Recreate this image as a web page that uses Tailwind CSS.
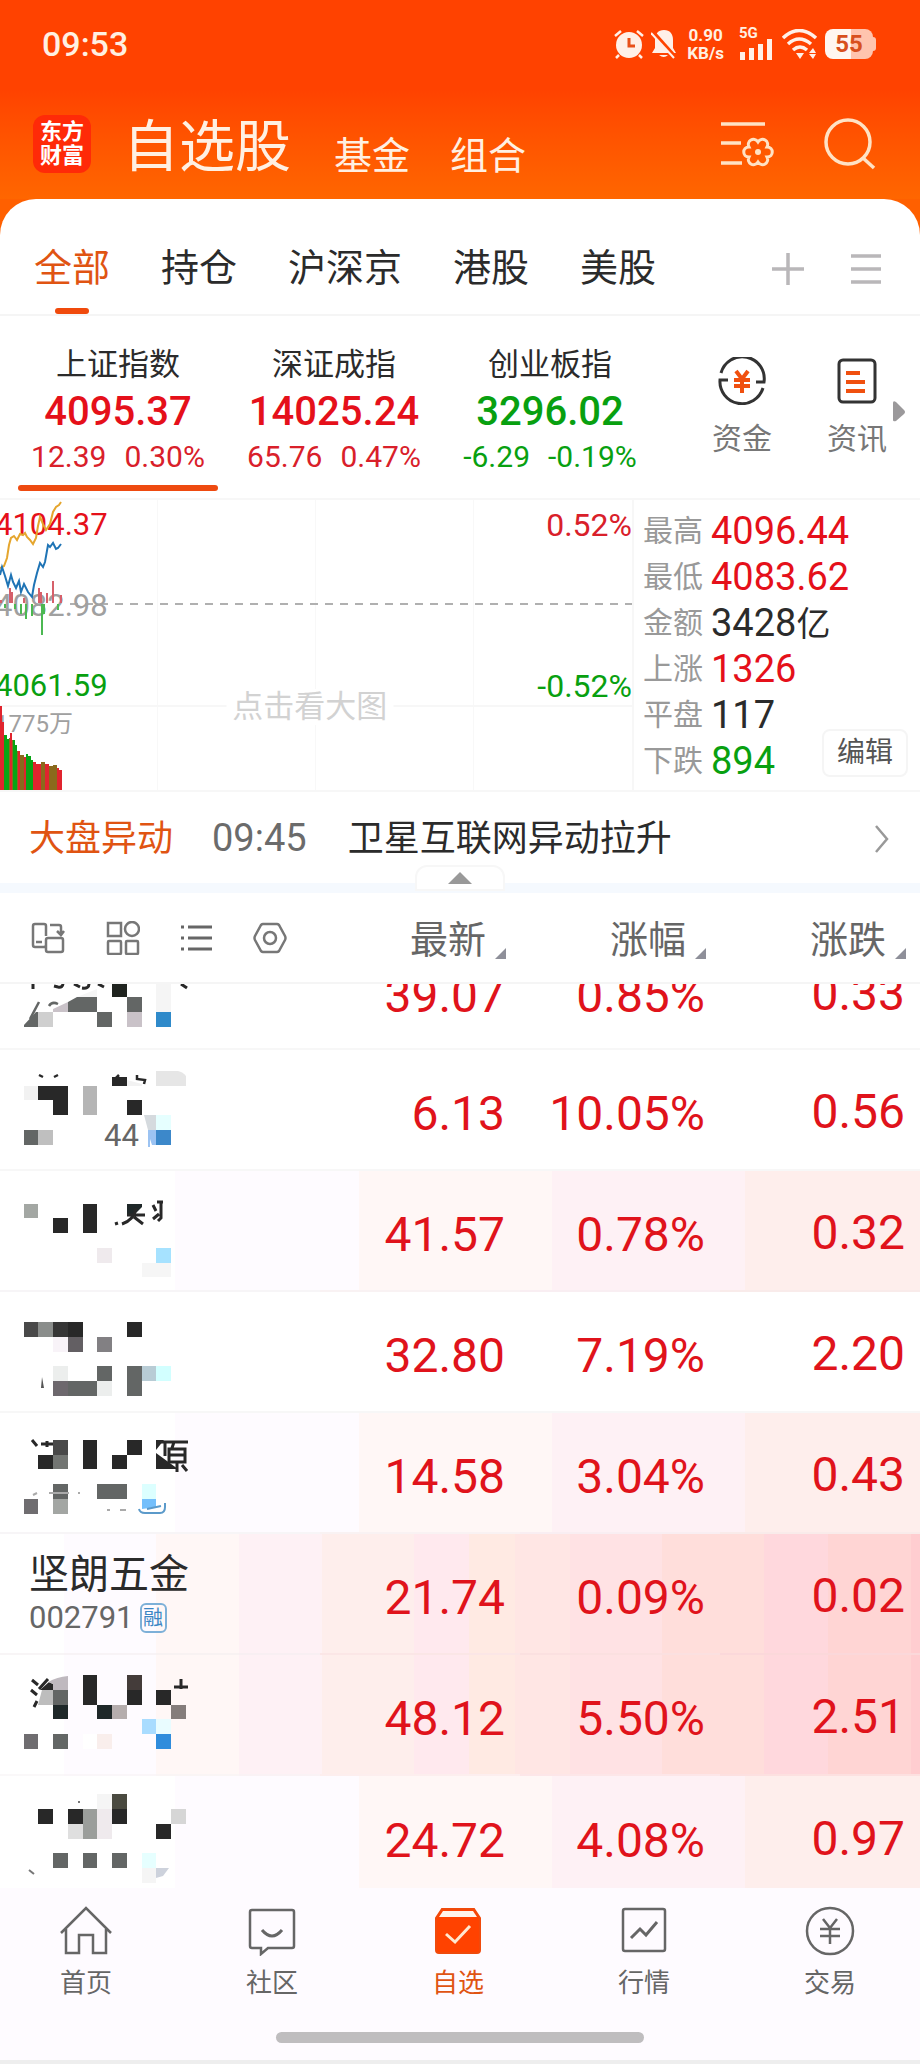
<!DOCTYPE html>
<html lang="zh-CN">

<head>
	<meta charset="UTF-8">
	<meta name="viewport" content="width=device-width, initial-scale=1.0">
	<script src="https://cdn.jsdelivr.net/npm/@tailwindcss/browser@4"></script>
	<title>自选股</title>
</head>

<body class="h-screen flex flex-col bg-white text-[#2b2b2b] font-['Roboto','Noto_Sans_CJK_SC',sans-serif]">

	<header class="bg-linear-to-b from-[#ff4200] from-45% to-[#ff6600] shrink-0 text-[#fff0e2]">

		<!-- Status bar -->
		<div class="flex items-center justify-between h-[88px] pl-[42px] pr-[44px]">
			<span class="text-[34px] leading-none font-medium">09:53</span>
			<div class="flex items-center gap-[7px]">
				<svg class="w-[30px] h-[30px]" viewBox="0 0 30 30">
					<circle cx="15" cy="16" r="13" fill="#fff0e8" />
					<path d="M1 7l6-5M29 7l-6-5M5 26l-3 3M25 26l3 3" stroke="#fff0e8" stroke-width="2.5" />
					<path d="M15 9v8h6" fill="none" stroke="#e8501a" stroke-width="3" />
				</svg>
				<svg class="w-[25px] h-[30px]" viewBox="0 0 25 30">
					<path d="M13 1c6 0 9 4 9 10v8l3 5H1l3-5v-8C4 5 7 1 13 1zM8 26h9q-4 4-9 0z" fill="#fff0e8" />
					<path d="M0 1l25 28" stroke="#ff4400" stroke-width="4" />
					<path d="M0 4l23 25" stroke="#fff0e8" stroke-width="2" />
				</svg>
				<div class="text-[17px] leading-[18px] font-bold text-center ml-1">0.90<br>KB/s</div>
				<div class="flex flex-col ml-2 w-[36px]">
					<span class="text-[15px] leading-[11px] font-bold">5G</span>
					<svg class="w-[34px] h-[21px]" viewBox="0 0 34 21">
						<path d="M1 13h5v8H1zM10 9h5v12h-5zM19 5h5v16h-5zM28 0h5v21h-5z" fill="#fff0e8" />
					</svg>
				</div>
				<svg class="w-[36px] h-[30px]" viewBox="0 0 36 30">
					<path d="M1 9q16-15 33 0M6 15q11-10 23 0M11 21q7-6 14 0" fill="none" stroke="#fff0e8" stroke-width="3.5" />
					<path d="M14 24h8l-4 6zM27 24l4-5 3 5zM27 25h7l-3 5z" fill="#fff0e8" />
				</svg>
				<div class="flex items-center">
					<span class="w-[48px] h-[30px] rounded-lg bg-linear-to-r from-[#fff6f0] from-55% to-[#ffc4ae] to-55% text-[#d8501e] text-[24px] leading-[30px] font-bold text-center">55</span>
					<span class="w-[3px] h-[14px] rounded-r bg-[#ffc4ae]"></span>
				</div>
			</div>
		</div>

		<!-- Title bar -->
		<div class="flex items-center h-[111px] pl-[33px] pr-[44px]">
			<div class="w-[58px] h-[58px] rounded-xl bg-[#ff2a08] text-white text-[22px] leading-[24px] font-bold text-center pt-[5px]">东方<br>财富</div>
			<h1 class="text-[56px] leading-[60px] ml-[32px] mt-[6px]">自选股</h1>
			<a href="#" class="text-[38px] leading-[40px] ml-[43px] mt-[24px]">基金</a>
			<a href="#" class="text-[38px] leading-[40px] ml-[40px] mt-[24px]">组合</a>
			<button class="ml-auto" aria-label="设置">
				<svg class="w-[53px] h-[46px]" viewBox="0 0 53 46" fill="none" stroke="#ffe2c4" stroke-width="3.5">
					<path d="M0 3h44M0 22h20M0 42h21" />
					<path d="M46 26C53 26 53 36 46 36C49 42 41 47 37 41C33 47 25 42 28 36C21 36 21 26 28 26C25 20 33 15 37 21C41 15 49 20 46 26z" stroke-width="3" />
					<circle cx="37" cy="31" r="3" fill="#ffe2c4" stroke="none" />
				</svg>
			</button>
			<button class="ml-[50px]" aria-label="搜索">
				<svg class="w-[52px] h-[52px]" viewBox="0 0 52 52" fill="none" stroke="#ffe2c4" stroke-width="3.5">
					<circle cx="24" cy="24" r="22" />
					<path d="M39 40l11 10" />
				</svg>
			</button>
		</div>
	</header>

	<div class="bg-[#ff6000] shrink-0">
		<!-- Group tabs -->
		<nav class="flex items-center h-[117px] pl-[34px] pr-[39px] pt-[24px] bg-white rounded-t-[36px] border-b-2 border-[#f5f5f5] text-[38px]">
			<div class="flex h-full gap-[51px]">
				<a href="#" class="relative flex items-center text-[#e05412]">全部
					<span class="absolute bottom-0 left-1/2 -translate-x-1/2 w-[34px] h-[6px] rounded-full bg-[#f04a0c]"></span>
				</a>
				<a href="#" class="flex items-center">持仓</a>
				<a href="#" class="flex items-center">沪深京</a>
				<a href="#" class="flex items-center">港股</a>
				<a href="#" class="flex items-center">美股</a>
			</div>
			<button class="ml-auto" aria-label="添加">
				<svg class="w-[32px] h-[32px]" viewBox="0 0 32 32" stroke="#b9b7b9" stroke-width="3.5">
					<path d="M16 0v32M0 16h32" />
				</svg>
			</button>
			<button class="ml-[47px]" aria-label="分组">
				<svg class="w-[30px] h-[32px]" viewBox="0 0 30 32" stroke="#b9b7b9" stroke-width="3.5">
					<path d="M0 3h30M0 16h30M0 29h30" />
				</svg>
			</button>
		</nav>
	</div>

	<!-- Indices -->
	<section class="relative flex shrink-0 h-[184px] pl-[10px] border-b-2 border-[#f7f7f7]">
		<div class="w-[216px] flex flex-col items-center pt-[31px]">
			<span class="text-[31px] leading-[36px]">上证指数</span>
			<span class="text-[40px] leading-[58px] font-medium text-[#e5101a]">4095.37</span>
			<span class="flex gap-[18px] text-[30px] leading-[32px] text-[#d9202a]"><span>12.39</span><span>0.30%</span></span>
			<span class="w-[200px] h-[6px] mt-[12px] rounded-full bg-[#ee4a10]"></span>
		</div>
		<div class="w-[216px] flex flex-col items-center pt-[31px]">
			<span class="text-[31px] leading-[36px]">深证成指</span>
			<span class="text-[40px] leading-[58px] font-medium text-[#e5101a]">14025.24</span>
			<span class="flex gap-[18px] text-[30px] leading-[32px] text-[#d9202a]"><span>65.76</span><span>0.47%</span></span>
		</div>
		<div class="w-[216px] flex flex-col items-center pt-[31px]">
			<span class="text-[31px] leading-[36px]">创业板指</span>
			<span class="text-[40px] leading-[58px] font-medium text-[#08a010]">3296.02</span>
			<span class="flex gap-[18px] text-[30px] leading-[32px] text-[#08a010]"><span>-6.29</span><span>-0.19%</span></span>
		</div>
		<div class="flex-1 flex justify-end gap-[55px] pr-[33px] pt-[41px] text-[30px] leading-[36px] text-[#777]">
			<a href="#" class="flex flex-col items-center gap-[16px]">
				<svg class="w-[48px] h-[48px]" viewBox="0 0 48 48" fill="none" stroke="#333" stroke-width="3">
					<path d="M3 16A22 22 0 0 1 46 25h-8M45 31A22 22 0 0 1 2 23h8" />
					<path d="M18 14l6 8 6-8M24 22v14M16 23h16M16 29h16" stroke="#f0500f" stroke-width="4" />
				</svg>
				资金
			</a>
			<a href="#" class="flex flex-col items-center gap-[16px]">
				<svg class="w-[40px] h-[48px]" viewBox="0 0 40 48" fill="none" stroke="#333" stroke-width="3">
					<rect x="2" y="3" width="36" height="42" rx="4" />
					<path d="M9 16h14M9 25h19M9 34h19" stroke="#f0500f" stroke-width="4" />
				</svg>
				资讯
			</a>
		</div>
		<svg class="absolute right-[15px] top-[85px] w-[12px] h-[21px]" viewBox="0 0 12 21">
			<path d="M0 2q0-3 3-1l8 8q2 2 0 4l-8 7q-3 1-3-1z" fill="#9b999b" />
		</svg>
	</section>

	<!-- Chart and market figures -->
	<section class="flex shrink-0 h-[292px] border-b-2 border-[#f7f7f7]">
		<div class="relative flex-1 overflow-hidden border-r-2 border-[#f7f7f7]">
			<div class="absolute inset-0 grid grid-cols-4 divide-x divide-[#f8f8f8]">
				<i></i><i></i><i></i><i></i>
			</div>
			<div class="absolute inset-x-0 top-[205px] h-[2px] bg-[#f7f7f7]"></div>
			<div class="absolute right-0 left-[70px] top-[103px] h-[2px] bg-[repeating-linear-gradient(90deg,#b0b0b0_0px,#b0b0b0_8px,transparent_8px,transparent_15px)]"></div>

			<span class="absolute -left-[5px] top-[7px] text-[31px] leading-[36px] text-[#e5101a]">4104.37</span>
			<span class="absolute -left-[5px] top-[88px] text-[31px] leading-[36px] text-[#a0a0a0]">4082.98</span>
			<span class="absolute -left-[5px] top-[168px] text-[31px] leading-[36px] text-[#08a010]">4061.59</span>
			<span class="absolute -left-[5px] top-[206px] text-[24px] leading-[36px] text-[#a0a0a0]">1775万</span>
			<span class="absolute right-0 top-[7px] text-[32px] leading-[36px] text-[#d9202a]">0.52%</span>
			<span class="absolute right-0 top-[168px] text-[32px] leading-[36px] text-[#08a010]">-0.52%</span>

			<svg class="absolute left-0 top-0 w-[64px] h-[290px]" viewBox="0 0 64 290" fill="none">
				<g stroke-width="2">
					<path stroke="#d6606a" d="M10 88v15M12 92v11M24 98v5M39 88v15M41 92v11M47 93v10M53 81v22M61 95v8M1 100v3" />
					<path stroke="#4cb852" d="M5 104v4M15 104v5M21 104v10M26 104v15M32 104v12M42 104v31M44 104v10M58 104v6" />
				</g>
				<path stroke="#e5a62e" stroke-width="2" d="M0 68l4-2 3-8 2-13 2-7 3-2 3 4 3-6 3 1 2-2 2 4 3 3 3 4 3-6 2-12 2-9 3 7 3 6 4-6 3-12 3-5 3-2 2-3" />
				<path stroke="#1f74b5" stroke-width="2" d="M0 75l2-8 3 9 3 10 3-11 2 7 3 6 3-7 2 11 3-8 4 8 4 5 2-12 3-12 3-10 3 4 2-5 3-17 2 2 3-4 3 6 2-1 3-4" />
				<path fill="#e0242e" d="M0 206h2v84h-2zM2 222h2v68h-2zM10 233h2v57h-2zM18 251h2v39h-2zM24 257h2v33h-2zM33 262h3v28h-3zM36 264h5v26h-5zM45 264h4v26h-4zM57 268h2v22h-2zM59 270h3v20h-3z" />
				<path fill="#08a414" d="M4 235h3v55h-3zM7 239h2v51h-2zM13 240h2v50h-2zM15 245h2v45h-2zM26 254h2v36h-2zM28 256h3v34h-3zM31 260h2v30h-2z" />
				<path fill="#8a6a1c" d="M9 238h1v52h-1zM12 240h1v50h-1zM17 251h1v39h-1zM20 255h4v35h-4zM41 262h4v28h-4zM49 266h4v24h-4zM53 265h4v25h-4z" />
			</svg>

			<span class="absolute left-[49%] -translate-x-1/2 top-[189px] px-[6px] text-[31px] leading-[36px] text-[#d2d2d2] bg-white">点击看大图</span>
		</div>

		<div class="relative w-[286px] pt-[8px] pl-[9px]">
			<dl class="grid grid-cols-[60px_1fr] gap-x-[8px] items-center text-[38px] leading-[46px]">
				<dt class="text-[30px] leading-[46px] text-[#999]">最高</dt>
				<dd class="text-[#e5101a]">4096.44</dd>
				<dt class="text-[30px] leading-[46px] text-[#999]">最低</dt>
				<dd class="text-[#e5101a]">4083.62</dd>
				<dt class="text-[30px] leading-[46px] text-[#999]">金额</dt>
				<dd>3428<span class="text-[34px] leading-none">亿</span></dd>
				<dt class="text-[30px] leading-[46px] text-[#999]">上涨</dt>
				<dd class="text-[#e5101a]">1326</dd>
				<dt class="text-[30px] leading-[46px] text-[#999]">平盘</dt>
				<dd>117</dd>
				<dt class="text-[30px] leading-[46px] text-[#999]">下跌</dt>
				<dd class="text-[#08a010]">894</dd>
			</dl>
			<button class="absolute right-[12px] bottom-[13px] w-[86px] h-[48px] rounded-lg border-2 border-[#f5f5f5] bg-white text-[28px] leading-none text-[#555]">编辑</button>
		</div>
	</section>

	<!-- Market news -->
	<section class="relative flex items-center shrink-0 h-[101px] pl-[29px] pr-[31px] pt-[2px] border-b-10 border-[#f5f9fe] text-[36px]">
		<span class="text-[#e05412]">大盘异动</span>
		<time class="text-[38px] text-[#6b6b6b] ml-[39px]">09:45</time>
		<a href="#" class="ml-[41px]">卫星互联网异动拉升</a>
		<svg class="ml-auto w-[14px] h-[28px]" viewBox="0 0 14 28" fill="none" stroke="#999" stroke-width="2.5">
			<path d="M1 1l11 13L1 27" />
		</svg>
		<button class="absolute -bottom-[8px] left-1/2 -translate-x-1/2 w-[90px] h-[26px] rounded-t-xl border-2 border-[#f7f7f7] bg-white flex items-center justify-center" aria-label="收起">
			<svg class="w-[24px] h-[12px]" viewBox="0 0 24 12">
				<path d="M12 0l12 12H0z" fill="#999" />
			</svg>
		</button>
	</section>

	<!-- Watchlist -->
	<main class="flex-1 min-h-0 overflow-hidden">
		<table class="w-full table-fixed border-separate border-spacing-0 text-[48px] leading-none text-[#e0131b]">
			<thead class="text-[38px] text-[#666]">
				<tr>
					<th class="h-[91px] border-b-2 border-[#f5f5f5] pl-[31px]">
						<div class="flex items-center gap-[41px]">
							<button aria-label="切换">
								<svg class="w-[34px] h-[32px]" viewBox="0 0 34 32" fill="none" stroke="#777" stroke-width="2.5">
									<path d="M15 14V4q0-2-2-2H4Q2 2 2 4v19q0 2 2 2h9q2 0 2-2v-5q0-2 2-2h13q2 0 2 2v10q0 2-2 2H17q-2 0-2-2v-5M5 20h6M19 3h9q2 0 2 2v7M26 9l4 4 3-4" />
								</svg>
							</button>
							<button aria-label="宫格">
								<svg class="w-[34px] h-[34px]" viewBox="0 0 34 34" fill="none" stroke="#777" stroke-width="2.5">
									<rect x="2" y="2" width="13" height="13" />
									<circle cx="26" cy="8" r="7" />
									<rect x="2" y="20" width="13" height="13" rx="1" />
									<rect x="20" y="20" width="12" height="13" rx="1" />
								</svg>
							</button>
							<button aria-label="列表">
								<svg class="w-[31px] h-[28px]" viewBox="0 0 31 28" stroke="#666" stroke-width="3">
									<path d="M7 3h24M7 14h24M7 25h24M0 3h3M0 14h3M0 25h3" />
								</svg>
							</button>
							<button aria-label="设置">
								<svg class="w-[34px] h-[32px]" viewBox="0 0 34 32" fill="none" stroke="#777" stroke-width="2.5">
									<path d="M10 2h14q1 0 2 1l6 11q1 2 0 4l-6 11q-1 1-2 1H10q-1 0-2-1L2 18q-1-2 0-4L8 3q1-1 2-1z" />
									<circle cx="17" cy="16" r="6" />
								</svg>
							</button>
						</div>
					</th>
					<th class="w-[200px] pt-[4px] border-b-2 border-[#f5f5f5] pr-[14px] font-normal">
						<button class="ml-auto flex items-end gap-[9px]">最新
							<svg class="w-[11px] h-[11px]" viewBox="0 0 11 11"><path d="M11 0v11H0z" fill="#8e8f99" /></svg>
						</button>
					</th>
					<th class="w-[200px] pt-[4px] border-b-2 border-[#f5f5f5] pr-[14px] font-normal">
						<button class="ml-auto flex items-end gap-[9px]">涨幅
							<svg class="w-[11px] h-[11px]" viewBox="0 0 11 11"><path d="M11 0v11H0z" fill="#8e8f99" /></svg>
						</button>
					</th>
					<th class="w-[200px] pt-[4px] border-b-2 border-[#f5f5f5] pr-[14px] font-normal">
						<button class="ml-auto flex items-end gap-[9px]">涨跌
							<svg class="w-[11px] h-[11px]" viewBox="0 0 11 11"><path d="M11 0v11H0z" fill="#8e8f99" /></svg>
						</button>
					</th>
				</tr>
			</thead>
			<tbody class="text-right">
				<!-- first row is half scrolled under the header -->
				<tr>
					<td class="h-[66px] p-0 border-b-2 border-[#f7f7f7]">
						<svg class="w-[200px] h-[64px]" viewBox="0 55 200 64">
							<path fill="#20241f" d="M112 53h15v15h-15z" />
							<path fill="#636665" d="M68 73l9-5h20v15H68zM127 68h15v15h-15zM24 96l12-13h2v15H24zM97 83h15v15H97z" />
							<path fill="#c9c2c8" d="M53 80l15-7v10H53zM127 83h15v15h-15z" />
							<path fill="#cfcfcf" d="M38 83h15v15H38z" />
							<path fill="#f5f5f5" d="M77 68l20-8v8zM156 53h15v30h-15z" />
							<path fill="#2f8aca" d="M156 83h15v15h-15z" />
							<path fill="none" stroke="#282828" stroke-width="3" d="M33 54v6M54 57l4 1M58 58q5 1 5-4M74 55l6 3M82 59q7 1 7-4M98 55l6 3M181 55l6 4" />
							<path fill="none" stroke="#636665" stroke-width="2.5" d="M39 73l-9 17M49 77q3-5 9-2" />
						</svg>
					</td>
					<td class="p-0 border-b-2 border-[#f7f7f7]">
						<div class="flex items-end justify-end h-[64px] overflow-hidden pr-[15px] pb-[28px]">39.07</div>
					</td>
					<td class="p-0 border-b-2 border-[#f7f7f7]">
						<div class="flex items-end justify-end h-[64px] overflow-hidden pr-[15px] pb-[28px]">0.85%</div>
					</td>
					<td class="p-0 border-b-2 border-[#f7f7f7]">
						<div class="flex items-end justify-end h-[64px] overflow-hidden pr-[15px] pb-[30px]">0.33</div>
					</td>
				</tr>
				<tr>
					<td class="h-[121px] p-0 border-b-2 border-[#f7f7f7]">
						<svg class="w-[200px] h-[119px]" viewBox="0 0 200 119">
							<path fill="#282828" d="M38 36h30v29H53V50H38zM112 27h15v9h-15zM127 50h15v15h-15z" />
							<path fill="#b5b5b5" d="M83 36h14v29H83z" />
							<path fill="#f2f2f2" d="M24 36h14v14H24zM127 30l15 4v2h-15z" />
							<path fill="#e6e6e6" d="M156 21h22q5 1 8 5v10h-30z" />
							<path fill="#d5dade" d="M144 65h12v15h-8z" />
							<path fill="#e6ffff" d="M156 65h15v15h-15z" />
							<path fill="#9cc3f2" d="M148 80h8v15h-4l-2-6v8h-2z" />
							<path fill="#3c88ca" d="M156 80h15v15h-15z" />
							<path fill="#636665" d="M24 80h14v15H24z" />
							<path fill="#bfbfbf" d="M38 80h15v15H38z" />
							<path fill="none" stroke="#282828" stroke-width="2.5" d="M39 25l4 2M54 27l4-2M116 28l3-3M137 25v4l8 1-1 4" />
							<text x="104" y="96" font-size="31" fill="#666">44</text>
						</svg>
					</td>
					<td class="pt-[8px] pr-[15px] border-b-2 border-[#f7f7f7]">6.13</td>
					<td class="pt-[8px] pr-[15px] border-b-2 border-[#f7f7f7]">10.05%</td>
					<td class="pt-[4px] pr-[15px] border-b-2 border-[#f7f7f7]">0.56</td>
				</tr>
				<tr class="bg-[linear-gradient(90deg,#fff_19%,#fefbff_19%,#fefbff_39%,#fff7f6_39%,#fff7f6_60%,#fef1f5_60%,#fef1f5_81%,#feeeec_81%)]">
					<td class="h-[121px] p-0 border-b-2 border-[#f7f5f7]">
						<svg class="w-[200px] h-[119px]" viewBox="0 0 200 119">
							<path fill="#a3a7a3" d="M24 33h14v14H24z" />
							<path fill="#282828" d="M53 47h15v15H53zM83 33h14v29H83z" />
							<path fill="#1f2829" d="M127 33h15v3l-8 8h-7z" />
							<path fill="#efeaed" d="M97 77h15v15H97z" />
							<path fill="#a6e2ff" d="M156 77h15v15h-15z" />
							<path fill="#f6f6f6" d="M142 92h29v14h-29z" />
							<path fill="none" stroke="#282828" stroke-width="3" d="M127 44h18M136 37q-2 12-14 16M134 46l9 7M115 53l3-1M153 34l3 6M153 48l6-5M157 31h6M161 31v16l-3 3" />
						</svg>
					</td>
					<td class="pt-[8px] pr-[15px] border-b-2 border-[#f9f2f3]">41.57</td>
					<td class="pt-[8px] pr-[15px] border-b-2 border-[#f9eef2]">0.78%</td>
					<td class="pt-[4px] pr-[15px] border-b-2 border-[#f9ebea]">0.32</td>
				</tr>
				<tr>
					<td class="h-[121px] p-0 border-b-2 border-[#f7f7f7]">
						<svg class="w-[200px] h-[119px]" viewBox="0 0 200 119">
							<path fill="#494949" d="M24 30h14v15H24z" />
							<path fill="#8a8d8b" d="M38 30h15v15H38z" />
							<path fill="#363636" d="M53 30h15v15H53z" />
							<path fill="#282828" d="M68 30h15v15H68zM127 30h15v15h-15z" />
							<path fill="#f8f3f8" d="M53 45h15v15H53z" />
							<path fill="#635f63" d="M68 45h15v15H68z" />
							<path fill="#828083" d="M97 45h15v15H97z" />
							<path fill="#eceeed" d="M53 74h15v15H53zM97 89h15v15H97z" />
							<path fill="#636665" d="M97 74h15v15H97zM127 74h15v30h-15zM68 89h29v15H68z" />
							<path fill="#6d686d" d="M53 89h15v15H53z" />
							<path fill="#b8ccd5" d="M142 74h14v15h-14z" />
							<path fill="#d2ffff" d="M156 74h15v15h-15z" />
							<path fill="#555" d="M42 85l2 11h-3z" />
						</svg>
					</td>
					<td class="pt-[8px] pr-[15px] border-b-2 border-[#f7f7f7]">32.80</td>
					<td class="pt-[8px] pr-[15px] border-b-2 border-[#f7f7f7]">7.19%</td>
					<td class="pt-[4px] pr-[15px] border-b-2 border-[#f7f7f7]">2.20</td>
				</tr>
				<tr class="bg-[linear-gradient(90deg,#fff_19%,#fefbff_19%,#fefbff_39%,#fff7f6_39%,#fff7f6_60%,#fef1f5_60%,#fef1f5_81%,#feeeec_81%)]">
					<td class="h-[121px] p-0 border-b-2 border-[#f7f5f7]">
						<svg class="w-[200px] h-[119px]" viewBox="0 0 200 119">
							<path fill="#494949" d="M53 27h15v15H53z" />
							<path fill="#282828" d="M38 42h15v14H38zM83 27h14v29H83zM127 27h15v15h-15zM112 42h15v14h-15zM156 27h8l-8 10zM156 40l22 16h-22z" />
							<path fill="#737673" d="M53 42h15v14H53z" />
							<path fill="#636665" d="M53 71h15v15H53zM97 71h30v15H97z" />
							<path fill="#6f6d70" d="M24 86h14v15H24z" />
							<path fill="#a3a6a3" d="M53 86h15v15H53z" />
							<path fill="#dcffff" d="M142 71h14v15h-14z" />
							<path fill="#74bffb" d="M142 86h14v8l-14 2z" />
							<path fill="none" stroke="#282828" stroke-width="3" d="M32 27l5 6M41 31h12M47 28v6M161 29h27M165 29v14M174 29l-2 6M169 36h16v13h-16zM169 42h16M177 49v10M182 52l5 6M167 52l4 2" />
							<path fill="none" stroke="#aaa" stroke-width="2" d="M33 82l4-2M49 80h20M78 80h2M107 97h3M120 97h6" />
							<path fill="none" stroke="#5b9aca" stroke-width="2" d="M139 96q1 4 6 4h15q5 0 5-6v-4M147 96l14-3" />
						</svg>
					</td>
					<td class="pt-[8px] pr-[15px] border-b-2 border-[#f9f2f3]">14.58</td>
					<td class="pt-[8px] pr-[15px] border-b-2 border-[#f9eef2]">3.04%</td>
					<td class="pt-[4px] pr-[15px] border-b-2 border-[#f9ebea]">0.43</td>
				</tr>
				<tr class="bg-[linear-gradient(90deg,#fff_7%,#fefbff_7%,#fefbff_17%,#fff7f6_17%,#fff7f6_26%,#fef1f5_26%,#fef1f5_35%,#feeeec_35%,#feeeec_45%,#ffe9ee_45%,#ffe9ee_51%,#ffeae3_51%,#ffeae3_56%,#ffe6e4_56%,#ffe6e4_62%,#ffe2e4_62%,#ffe2e4_72%,#ffdedb_72%,#ffdedb_83%,#ffd8dd_83%,#ffd8dd_90%,#ffd5d4_90%,#ffd5d4_99%,#ffcdd0_99%)]">
					<td class="h-[121px] p-0 pt-[4px] pl-[29px] border-b-2 border-[#f3eef0]/60 text-left text-[#2b2b2b]">
						<div class="text-[40px] leading-[44px]">坚朗五金</div>
						<div class="flex items-center gap-[6px] text-[31px] leading-[42px] text-[#666]">002791
							<span class="w-[27px] h-[30px] rounded-md border-2 border-[#7db0d8] text-[20px] leading-[26px] text-center text-[#3b86c4]">融</span>
						</div>
					</td>
					<td class="pt-[8px] pr-[15px] border-b-2 border-[#fbe6e6]">21.74</td>
					<td class="pt-[8px] pr-[15px] border-b-2 border-[#fbe0e0]">0.09%</td>
					<td class="pt-[4px] pr-[15px] border-b-2 border-[#fbd8da]">0.02</td>
				</tr>
				<tr class="bg-[linear-gradient(90deg,#fff_7%,#fefbff_7%,#fefbff_17%,#fff7f6_17%,#fff7f6_26%,#fef1f5_26%,#fef1f5_35%,#feeeec_35%,#feeeec_45%,#ffe9ee_45%,#ffe9ee_51%,#ffeae3_51%,#ffeae3_56%,#ffe6e4_56%,#ffe6e4_62%,#ffe2e4_62%,#ffe2e4_72%,#ffdedb_72%,#ffdedb_83%,#ffd8dd_83%,#ffd8dd_90%,#ffd5d4_90%,#ffd5d4_99%,#ffcdd0_99%)]">
					<td class="h-[121px] p-0 border-b-2 border-[#f7f3f5]/60">
						<svg class="w-[200px] h-[119px]" viewBox="0 0 200 119">
							<path fill="#282828" d="M83 20h14v30H83zM127 35h15v15h-15zM156 35h15v15h-15zM40 35l9-8 4 2v6z" />
							<path fill="#443c3a" d="M127 20h15v15h-15z" />
							<path fill="#bfb9bf" d="M48 27q9-5 20-6v14H53v-6z" />
							<path fill="#bdbdbd" d="M42 35h11v15H38z" />
							<path fill="#636665" d="M53 35h15v15H53zM53 79h15v15H53z" />
							<path fill="#1f2829" d="M53 50h15v14H53zM97 50h15v14H97z" />
							<path fill="#b5adad" d="M112 50h15v14h-15z" />
							<path fill="#857d7b" d="M171 50h15v14h-15z" />
							<path fill="#a9dcff" d="M142 64h14v15h-14z" />
							<path fill="#e9fcff" d="M156 64h15v15h-15z" />
							<path fill="#2f8cdc" d="M156 79h15v15h-15z" />
							<path fill="#6f6d70" d="M24 79h14v15H24z" />
							<path fill="#fff" d="M83 79h14v15H83z" />
							<path fill="#f9eeec" d="M97 79h15v15H97z" />
							<path fill="none" stroke="#282828" stroke-width="3" d="M32 25l6 5M31 35l6 5M34 52l3-6M39 34l9-10M174 32h14M181 24v10" />
						</svg>
					</td>
					<td class="pt-[8px] pr-[15px] border-b-2 border-[#fdeeee]">48.12</td>
					<td class="pt-[8px] pr-[15px] border-b-2 border-[#fde6e8]">5.50%</td>
					<td class="pt-[4px] pr-[15px] border-b-2 border-[#fde0e0]">2.51</td>
				</tr>
				<tr class="bg-[linear-gradient(90deg,#fff_19%,#fefbff_19%,#fefbff_39%,#fff7f6_39%,#fff7f6_60%,#fef1f5_60%,#fef1f5_81%,#feeeec_81%)]">
					<td class="h-[121px] p-0">
						<svg class="w-[200px] h-[119px]" viewBox="0 0 200 119">
							<path fill="#f5f5f5" d="M97 17h15v15H97zM142 91h14v15h-14z" />
							<path fill="#4a4a40" d="M112 17h15v15h-15z" />
							<path fill="#282828" d="M38 32h15v15H38zM68 32h15v15H68zM112 32h15v15h-15zM156 47h15v15h-15z" />
							<path fill="#9b9e9b" d="M83 32h14v30H83z" />
							<path fill="#efeaed" d="M97 32h15v30H97z" />
							<path fill="#d6d6d6" d="M171 32h15v15h-15z" />
							<path fill="#dfdfdf" d="M68 47h15v15H68z" />
							<path fill="#636665" d="M53 76h15v15H53zM83 76h14v15H83zM112 76h15v15h-15z" />
							<path fill="#e6ffff" d="M142 76h14v15h-14z" />
							<path fill="#cdd2dc" d="M156 91h13l-6 8-7 2z" />
							<path fill="none" stroke="#777" stroke-width="2" d="M29 93l5 4M78 25h2" />
						</svg>
					</td>
					<td class="pt-[8px] pr-[15px]">24.72</td>
					<td class="pt-[8px] pr-[15px]">4.08%</td>
					<td class="pt-[4px] pr-[15px]">0.97</td>
				</tr>
			</tbody>
		</table>
	</main>

	<!-- Bottom navigation -->
	<footer class="shrink-0 h-[176px] bg-[#fefbff] border-b-4 border-[#eeeeee] flex flex-col">
		<nav class="flex justify-between pl-[60px] pr-[64px] pt-[18px] text-[26px] leading-[32px] text-[#666]">
			<a href="#" class="flex flex-col items-center gap-[11px]">
				<svg class="w-[52px] h-[50px]" viewBox="0 0 52 50" fill="none" stroke="#666" stroke-width="2.5">
					<path d="M1 27L26 2l25 25M6 23v24h13V29h14v18h13V23" />
				</svg>
				首页
			</a>
			<a href="#" class="flex flex-col items-center gap-[11px]">
				<svg class="w-[48px] h-[50px]" viewBox="0 0 48 50" fill="none" stroke="#666" stroke-width="2.5">
					<path d="M4 4h40q2 0 2 2v34q0 2-2 2H20l-7 6v-6H4q-2 0-2-2V6q0-2 2-2z" />
					<path d="M14 24q10 12 20 0" stroke-width="3" />
				</svg>
				社区
			</a>
			<a href="#" class="flex flex-col items-center gap-[11px] text-[#e05412]">
				<svg class="w-[48px] h-[50px]" viewBox="0 0 48 50" fill="none">
					<path d="M8 3h32l6 9v32q0 3-3 3H5q-3 0-3-3V12z" fill="#ff4200" stroke="#f04a0c" stroke-width="2" />
					<path d="M9 5h30l4 6H5z" fill="#fff4ea" />
					<path d="M12 28l9 8 15-16" stroke="#ffe8d0" stroke-width="3" />
				</svg>
				自选
			</a>
			<a href="#" class="flex flex-col items-center gap-[11px]">
				<svg class="w-[46px] h-[50px]" viewBox="0 0 46 50" fill="none" stroke="#666" stroke-width="2.5">
					<rect x="2" y="3" width="42" height="42" rx="2" />
					<path d="M10 32l9-9 6 6 11-13" stroke-width="3" />
				</svg>
				行情
			</a>
			<a href="#" class="flex flex-col items-center gap-[11px]">
				<svg class="w-[50px] h-[50px]" viewBox="0 0 50 50" fill="none" stroke="#666" stroke-width="2.5">
					<circle cx="25" cy="25" r="23" />
					<path d="M18 13l7 9 7-9M25 22v16M15 23h20M15 30h20" />
				</svg>
				交易
			</a>
		</nav>
		<div class="w-2/5 h-[11px] mx-auto mt-auto mb-[17px] rounded-full bg-[#bfbdbf]"></div>
	</footer>

</body>

</html>
